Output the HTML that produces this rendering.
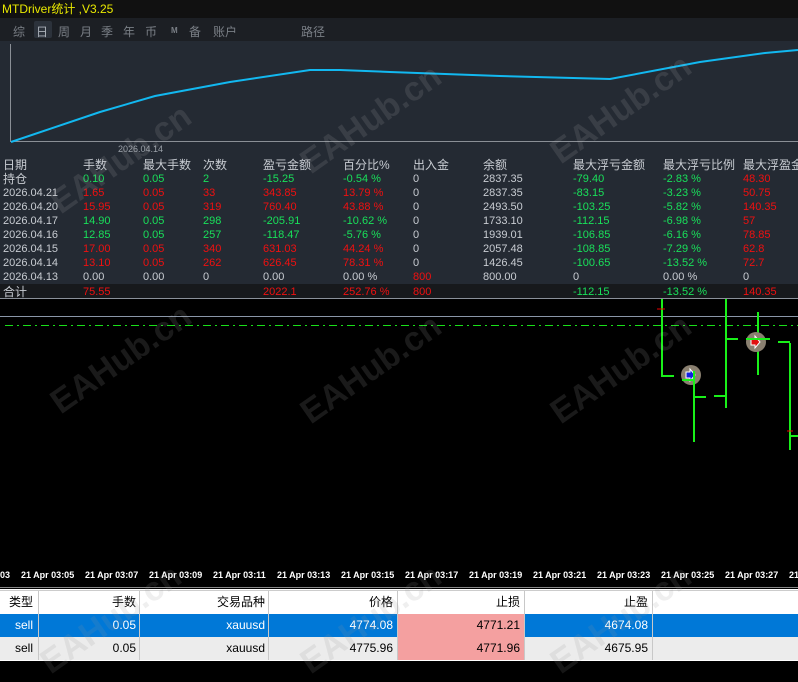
<!DOCTYPE html>
<html><head><meta charset="utf-8"><style>
*{margin:0;padding:0;box-sizing:border-box}
body{width:798px;height:661px;overflow:hidden;background:#000;font-family:"Liberation Sans","Noto Sans CJK SC",sans-serif;position:relative}
.abs{position:absolute}
#title{left:0;top:0;width:798px;height:18px;background:#111;color:#e8e800;font-size:12px;line-height:18px;padding-left:2px}
#tabs{left:0;top:18px;width:798px;height:23px;background:#1c1f24;color:#7a7f86;font-size:12px}
#tabs span{position:absolute;top:5px}
#chart{left:0;top:41px;width:798px;height:244px;background:#242a33}
.t{position:absolute;font-size:11px;white-space:nowrap;line-height:14px}
.w{color:#c8ccd2}.g{color:#19e05a}.r{color:#f01010}
#tot{left:0;top:284px;width:798px;height:14px;background:#17191c}
#main{left:0;top:299px;width:798px;height:269px;background:#000}
#axis{left:0;top:568px;width:798px;height:20px;background:#000;border-bottom:1px solid #888}
.tl{position:absolute;top:2px;color:#fff;font-size:9px;font-weight:bold;font-family:"Liberation Sans",sans-serif}
#bt{left:0;top:589px;width:798px;height:72px;background:#fff;font-size:12px}
.row{position:absolute;left:0;width:798px;height:23px}
.c{position:absolute;top:0;height:23px;line-height:23px;text-align:right;border-right:1px solid #c8c8c8}
.wm{position:absolute;font-size:34px;font-weight:bold;color:rgba(200,200,200,0.13);transform:rotate(-35deg);white-space:nowrap}
</style></head><body>
<div id="title" class="abs">MTDriver统计 ,V3.25</div>
<div id="tabs" class="abs">
<span style="left:13px">综</span>
<span style="left:34px;top:3px;width:18px;height:17px;background:#2c323b;border-radius:2px"></span>
<span style="left:36px;color:#aab0b8">日</span>
<span style="left:58px">周</span><span style="left:80px">月</span><span style="left:101px">季</span><span style="left:123px">年</span><span style="left:145px">币</span>
<span style="left:171px;font-size:8px;top:8px;font-weight:bold">M</span>
<span style="left:189px">备</span><span style="left:213px">账户</span><span style="left:301px">路径</span>
</div>
<div id="chart" class="abs">
<svg class="abs" style="left:0;top:0" width="798" height="244">
<line x1="10.5" y1="3" x2="10.5" y2="101" stroke="#8a8f96"/>
<line x1="10" y1="100.5" x2="798" y2="100.5" stroke="#8a8f96"/>
<polyline points="11,101 100,71 155,55 230,41 310,29 340,29 390,31 500,35 610,38 700,21 765,12 798,9" fill="none" stroke="#12b8f0" stroke-width="2"/>
</svg>
<div class="t" style="left:118px;top:101px;font-size:9px;color:#9aa0a8">2026.04.14</div>
</div>
<div id="tot" class="abs"></div>
<!-- table -->
<div class="t w" style="left:3px;top:158px;font-size:12px">日期</div>
<div class="t w" style="left:83px;top:158px;font-size:12px">手数</div>
<div class="t w" style="left:143px;top:158px;font-size:12px">最大手数</div>
<div class="t w" style="left:203px;top:158px;font-size:12px">次数</div>
<div class="t w" style="left:263px;top:158px;font-size:12px">盈亏金额</div>
<div class="t w" style="left:343px;top:158px;font-size:12px">百分比%</div>
<div class="t w" style="left:413px;top:158px;font-size:12px">出入金</div>
<div class="t w" style="left:483px;top:158px;font-size:12px">余额</div>
<div class="t w" style="left:573px;top:158px;font-size:12px">最大浮亏金额</div>
<div class="t w" style="left:663px;top:158px;font-size:12px">最大浮亏比例</div>
<div class="t w" style="left:743px;top:158px;font-size:12px">最大浮盈金额</div>

<div class="t w" style="left:3px;top:172px;font-size:12px">持仓</div>
<div class="t g" style="left:83px;top:172px">0.10</div><div class="t g" style="left:143px;top:172px">0.05</div><div class="t g" style="left:203px;top:172px">2</div><div class="t g" style="left:263px;top:172px">-15.25</div><div class="t g" style="left:343px;top:172px">-0.54 %</div><div class="t w" style="left:413px;top:172px">0</div><div class="t w" style="left:483px;top:172px">2837.35</div><div class="t g" style="left:573px;top:172px">-79.40</div><div class="t g" style="left:663px;top:172px">-2.83 %</div><div class="t r" style="left:743px;top:172px">48.30</div>

<div class="t w" style="left:3px;top:186px">2026.04.21</div>
<div class="t r" style="left:83px;top:186px">1.65</div><div class="t r" style="left:143px;top:186px">0.05</div><div class="t r" style="left:203px;top:186px">33</div><div class="t r" style="left:263px;top:186px">343.85</div><div class="t r" style="left:343px;top:186px">13.79 %</div><div class="t w" style="left:413px;top:186px">0</div><div class="t w" style="left:483px;top:186px">2837.35</div><div class="t g" style="left:573px;top:186px">-83.15</div><div class="t g" style="left:663px;top:186px">-3.23 %</div><div class="t r" style="left:743px;top:186px">50.75</div>

<div class="t w" style="left:3px;top:200px">2026.04.20</div>
<div class="t r" style="left:83px;top:200px">15.95</div><div class="t r" style="left:143px;top:200px">0.05</div><div class="t r" style="left:203px;top:200px">319</div><div class="t r" style="left:263px;top:200px">760.40</div><div class="t r" style="left:343px;top:200px">43.88 %</div><div class="t w" style="left:413px;top:200px">0</div><div class="t w" style="left:483px;top:200px">2493.50</div><div class="t g" style="left:573px;top:200px">-103.25</div><div class="t g" style="left:663px;top:200px">-5.82 %</div><div class="t r" style="left:743px;top:200px">140.35</div>

<div class="t w" style="left:3px;top:214px">2026.04.17</div>
<div class="t g" style="left:83px;top:214px">14.90</div><div class="t g" style="left:143px;top:214px">0.05</div><div class="t g" style="left:203px;top:214px">298</div><div class="t g" style="left:263px;top:214px">-205.91</div><div class="t g" style="left:343px;top:214px">-10.62 %</div><div class="t w" style="left:413px;top:214px">0</div><div class="t w" style="left:483px;top:214px">1733.10</div><div class="t g" style="left:573px;top:214px">-112.15</div><div class="t g" style="left:663px;top:214px">-6.98 %</div><div class="t r" style="left:743px;top:214px">57</div>

<div class="t w" style="left:3px;top:228px">2026.04.16</div>
<div class="t g" style="left:83px;top:228px">12.85</div><div class="t g" style="left:143px;top:228px">0.05</div><div class="t g" style="left:203px;top:228px">257</div><div class="t g" style="left:263px;top:228px">-118.47</div><div class="t g" style="left:343px;top:228px">-5.76 %</div><div class="t w" style="left:413px;top:228px">0</div><div class="t w" style="left:483px;top:228px">1939.01</div><div class="t g" style="left:573px;top:228px">-106.85</div><div class="t g" style="left:663px;top:228px">-6.16 %</div><div class="t r" style="left:743px;top:228px">78.85</div>

<div class="t w" style="left:3px;top:242px">2026.04.15</div>
<div class="t r" style="left:83px;top:242px">17.00</div><div class="t r" style="left:143px;top:242px">0.05</div><div class="t r" style="left:203px;top:242px">340</div><div class="t r" style="left:263px;top:242px">631.03</div><div class="t r" style="left:343px;top:242px">44.24 %</div><div class="t w" style="left:413px;top:242px">0</div><div class="t w" style="left:483px;top:242px">2057.48</div><div class="t g" style="left:573px;top:242px">-108.85</div><div class="t g" style="left:663px;top:242px">-7.29 %</div><div class="t r" style="left:743px;top:242px">62.8</div>

<div class="t w" style="left:3px;top:256px">2026.04.14</div>
<div class="t r" style="left:83px;top:256px">13.10</div><div class="t r" style="left:143px;top:256px">0.05</div><div class="t r" style="left:203px;top:256px">262</div><div class="t r" style="left:263px;top:256px">626.45</div><div class="t r" style="left:343px;top:256px">78.31 %</div><div class="t w" style="left:413px;top:256px">0</div><div class="t w" style="left:483px;top:256px">1426.45</div><div class="t g" style="left:573px;top:256px">-100.65</div><div class="t g" style="left:663px;top:256px">-13.52 %</div><div class="t r" style="left:743px;top:256px">72.7</div>

<div class="t w" style="left:3px;top:270px">2026.04.13</div>
<div class="t w" style="left:83px;top:270px">0.00</div><div class="t w" style="left:143px;top:270px">0.00</div><div class="t w" style="left:203px;top:270px">0</div><div class="t w" style="left:263px;top:270px">0.00</div><div class="t w" style="left:343px;top:270px">0.00 %</div><div class="t r" style="left:413px;top:270px">800</div><div class="t w" style="left:483px;top:270px">800.00</div><div class="t w" style="left:573px;top:270px">0</div><div class="t w" style="left:663px;top:270px">0.00 %</div><div class="t w" style="left:743px;top:270px">0</div>

<div class="t w" style="left:3px;top:285px;font-size:12px">合计</div>
<div class="t r" style="left:83px;top:285px">75.55</div><div class="t r" style="left:263px;top:285px">2022.1</div><div class="t r" style="left:343px;top:285px">252.76 %</div><div class="t r" style="left:413px;top:285px">800</div><div class="t g" style="left:573px;top:285px">-112.15</div><div class="t g" style="left:663px;top:285px">-13.52 %</div><div class="t r" style="left:743px;top:285px">140.35</div>

<div class="abs" style="left:0;top:298px;width:798px;height:1px;background:#8a9099"></div>
<div id="main" class="abs">
<svg class="abs" style="left:0;top:0" width="798" height="269">
<line x1="0" y1="17.5" x2="798" y2="17.5" stroke="#8a96a8"/>
<line x1="5" y1="26.5" x2="798" y2="26.5" stroke="#19e019" stroke-dasharray="8,4,2,4"/>
<g stroke="#19f019" stroke-width="2" fill="none">
<path d="M662 0V78M662 77H674"/>
<path d="M694 70V143M682 81H694M694 98H706"/>
<path d="M726 0V109M726 40H738M714 97H726"/>
<path d="M758 13V76M746 40H770"/>
<path d="M790 44V151M778 43H790M790 137H798"/>
</g>
<line x1="657" y1="10" x2="665" y2="10" stroke="#e00" />
<line x1="787" y1="132" x2="793" y2="132" stroke="#e00"/>
<circle cx="691" cy="76" r="10" fill="#8a8070"/>
<path d="M686 73h4v-3l5 6-5 6v-3h-4z" fill="#1020e0" stroke="#fff"/>
<line x1="682" y1="81" x2="694" y2="81" stroke="#19f019" stroke-width="2"/>
<line x1="694" y1="72" x2="694" y2="90" stroke="#19f019" stroke-width="2"/>
<circle cx="756" cy="43" r="10" fill="#8a8070"/>
<path d="M751 40h4v-3l5 6-5 6v-3h-4z" fill="#e01010" stroke="#fff"/>
<line x1="746" y1="40" x2="770" y2="40" stroke="#19f019" stroke-width="2"/>
</svg>
</div>
<div id="axis" class="abs">
<div class="tl" style="left:0">03</div>
<div class="tl" style="left:21px">21 Apr 03:05</div><div class="tl" style="left:85px">21 Apr 03:07</div><div class="tl" style="left:149px">21 Apr 03:09</div><div class="tl" style="left:213px">21 Apr 03:11</div><div class="tl" style="left:277px">21 Apr 03:13</div><div class="tl" style="left:341px">21 Apr 03:15</div><div class="tl" style="left:405px">21 Apr 03:17</div><div class="tl" style="left:469px">21 Apr 03:19</div><div class="tl" style="left:533px">21 Apr 03:21</div><div class="tl" style="left:597px">21 Apr 03:23</div><div class="tl" style="left:661px">21 Apr 03:25</div><div class="tl" style="left:725px">21 Apr 03:27</div><div class="tl" style="left:789px">21</div>
</div>
<div id="bt" class="abs">
<div class="row" style="top:1px;background:#fff;border-top:1px solid #ccc">
<div class="c" style="left:0;width:39px;padding-right:5px">类型</div>
<div class="c" style="left:39px;width:101px;padding-right:3px">手数</div>
<div class="c" style="left:140px;width:129px;padding-right:3px">交易品种</div>
<div class="c" style="left:269px;width:129px;padding-right:4px">价格</div>
<div class="c" style="left:398px;width:127px;padding-right:4px">止损</div>
<div class="c" style="left:525px;width:128px;padding-right:4px">止盈</div>
</div>
<div class="row" style="top:25px;background:#0078d7;color:#fff">
<div class="c" style="left:0;width:39px;padding-right:5px">sell</div>
<div class="c" style="left:39px;width:101px;padding-right:3px">0.05</div>
<div class="c" style="left:140px;width:129px;padding-right:3px">xauusd</div>
<div class="c" style="left:269px;width:129px;padding-right:4px">4774.08</div>
<div class="c" style="left:398px;width:127px;padding-right:4px;background:#f4a0a0;color:#000">4771.21</div>
<div class="c" style="left:525px;width:128px;padding-right:4px">4674.08</div>
</div>
<div class="row" style="top:48px;background:#ececec;color:#000">
<div class="c" style="left:0;width:39px;padding-right:5px">sell</div>
<div class="c" style="left:39px;width:101px;padding-right:3px">0.05</div>
<div class="c" style="left:140px;width:129px;padding-right:3px">xauusd</div>
<div class="c" style="left:269px;width:129px;padding-right:4px">4775.96</div>
<div class="c" style="left:398px;width:127px;padding-right:4px;background:#f4a0a0">4771.96</div>
<div class="c" style="left:525px;width:128px;padding-right:4px">4675.95</div>
</div>
</div>
<div class="wm" style="left:40px;top:140px">EAHub.cn</div>
<div class="wm" style="left:290px;top:100px">EAHub.cn</div>
<div class="wm" style="left:540px;top:90px">EAHub.cn</div>
<div class="wm" style="left:40px;top:340px">EAHub.cn</div>
<div class="wm" style="left:290px;top:350px">EAHub.cn</div>
<div class="wm" style="left:540px;top:350px">EAHub.cn</div>
<div class="wm" style="left:30px;top:600px;color:rgba(150,150,150,0.15)">EAHub.cn</div>
<div class="wm" style="left:290px;top:600px;color:rgba(150,150,150,0.15)">EAHub.cn</div>
<div class="wm" style="left:540px;top:600px;color:rgba(150,150,150,0.15)">EAHub.cn</div>
</body></html>
